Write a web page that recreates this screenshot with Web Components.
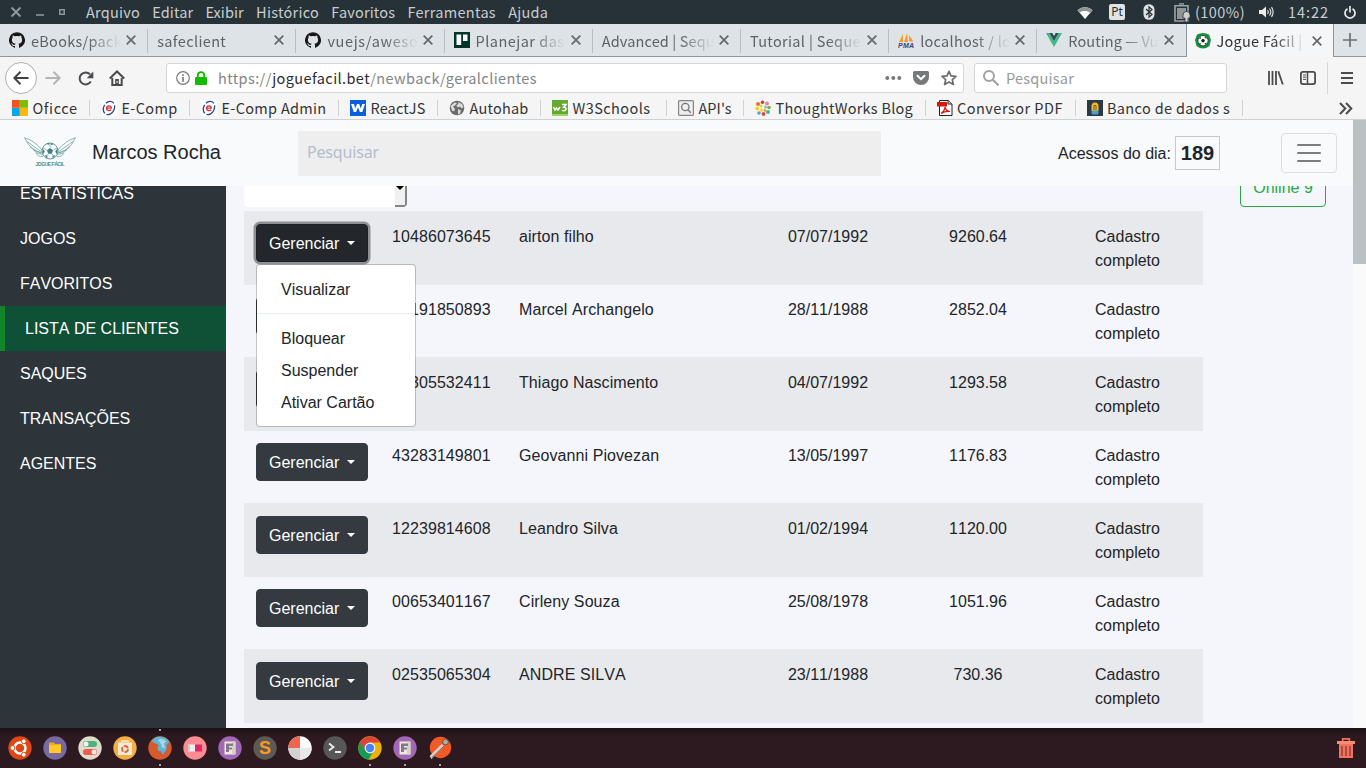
<!DOCTYPE html>
<html lang="pt-BR">
<head>
<meta charset="utf-8">
<title>Jogue Fácil</title>
<style>
html,body{margin:0;height:100%;overflow:hidden}
body{font:16px/24px "Liberation Sans",Arial,sans-serif;color:#212529}
</style>
</head>
<body>
<desk-top></desk-top>
<script>
const sheet = (css, html) => `<style>*{box-sizing:border-box}${css}</style>${html}`;
const define = (name, render, after) => customElements.define(name, class extends HTMLElement {
  connectedCallback() {
    if (this.shadowRoot) return;
    const t = document.createElement('template');
    t.innerHTML = render(this);
    this.attachShadow({mode: 'open'}).append(t.content.cloneNode(true));
    if (after) after(this);
  }
});

const pageIcon = '<circle cx="12" cy="12" r="11.7" fill="#a368b5"/><path d="M6.500 5.500h11v13h-11z" fill="#eceadf"/><path d="M14 5.500h3.500v13H14z" fill="#d5d1c5"/><path d="M8 7.500h7V10h-4v1.500h3v2h-3V16H8z" fill="#857889"/>';
const ecomp = '<path fill="#fff" d="M0 0h16v16H0z"/><ellipse cx="8" cy="8" rx="5.300" ry="6.900" fill="none" stroke="#2a4490" stroke-width="1.300" stroke-dasharray="9 2" transform="rotate(25 8 8)"/><path d="M5.500 8.200h4.800c0-3.200-4.700-3.200-4.800 0 0 2.700 3.200 3 4.700 1.500" fill="none" stroke="#d8333c" stroke-width="1.300"/>';
const github = '<path fill="#191717" d="M8 .2a8 8 0 0 0-2.5 15.6c.4.1.5-.2.5-.4v-1.5c-2.200.5-2.700-1-2.700-1-.4-.9-.9-1.200-.9-1.200-.7-.5.1-.5.1-.5.8.1 1.200.8 1.200.8.7 1.300 1.900.9 2.300.7.1-.5.3-.9.5-1.100-1.800-.2-3.600-.9-3.600-3.900 0-.9.3-1.600.8-2.100-.1-.2-.4-1 .1-2.100 0 0 .7-.2 2.200.8a7.500 7.500 0 0 1 4 0c1.500-1 2.200-.8 2.200-.8.4 1.100.2 1.900.1 2.100.5.6.8 1.300.8 2.100 0 3.100-1.900 3.700-3.700 3.900.3.300.6.8.6 1.500v2.300c0 .2.1.5.5.4A8 8 0 0 0 8 .2z"/>';
// name: [viewBox width, viewBox height, content]
const ICONS = {
  wclose: [12,12,'<path d="M1.500 1.500l9 9M10.500 1.500l-9 9" stroke="#8d979c" stroke-width="2" fill="none"/>'],
  wmin: [8,8,'<path d="M0 7h8" stroke="#8d979c" stroke-width="1.600"/>'],
  wmax: [6,6,'<path d="M.8.8h4.400v4.400H.8z" fill="none" stroke="#8d979c" stroke-width="1.500"/>'],
  close: [10,10,'<path d="M.7.7l8.600 8.600M9.300.7L.7 9.300" stroke="#66696c" stroke-width="1.700" fill="none"/>'],
  plus: [14,14,'<path d="M7 0v14M0 7h14" stroke="#6b7073" stroke-width="1.700"/>'],
  wifi: [16,13,'<path d="M8 13L.5 4.300C4.500.2 11.500.2 15.500 4.300z" fill="#fff"/><path d="M2.800 6.500L.5 4.100C4.500.2 11.500.2 15.500 4.100L13 6.700C10 4.500 6 4.500 2.800 6.500z" fill="#8d9498"/>'],
  bt: [12,16,'<rect x=".5" y=".3" width="11" height="15.400" rx="5.200" fill="#dfe3e5"/><path d="M3 5l6 5.500-3 2.700V2.800L9 5.500 3 11" fill="none" stroke="#263238" stroke-width="1.200"/>'],
  bat: [17,19,'<path d="M5 .9h5" stroke="#888f92" stroke-width="1.700"/><path d="M1 2.700h13V18H1z" fill="none" stroke="#9da3a6" stroke-width="1.600"/><path d="M3 5h9v11H3z" fill="#8f9598"/><path d="M9 15v-3a3.500 3.500 0 0 1 7 0v3h-2v4h-3v-4z" fill="#d0d3d5" stroke="#263238" stroke-width=".8"/>'],
  vol: [15,12,'<path d="M0 4h3l4-3.500v11L3 8H0z" fill="#eceff0"/><path d="M8.500 4q1.500 2 0 4M10.500 2.500q2.600 3.500 0 7M12.500 1.200q3.200 4.800 0 9.600" fill="none" stroke="#dce0e2" stroke-width="1.200"/>'],
  power: [12,13,'<path d="M3.500 2.700a5 5 0 1 0 5 0M6 0v6.500" fill="none" stroke="#e8ebec" stroke-width="1.700"/>'],
  github: [16,16,github],
  trello: [16,16,'<path fill="#04352a" d="M0 0h16v16H0z"/><path fill="#fff" d="M2.500 2.500h4.700v10.500H2.500zM9 2.500h4.500v6.500H9z"/>'],
  pma: [16,16,'<path d="M1 10L5 2v8zM6 10L9 1l1 9zM11 9.500V3l4.500 6.500z" fill="#f59b2e"/><text x="0" y="15.500" font-family="Liberation Sans" font-size="7" font-weight="700" font-style="italic" fill="#3b4478" textLength="16">PMA</text>'],
  vue: [16,14,'<path d="M0 0h3.300L8 8l4.700-8H16L8 14z" fill="#42b883"/><path d="M3.300 0h3L8 3l1.700-3h3L8 8z" fill="#35495e"/>'],
  jogue: [16,16,'<path d="M2 1.500q6-3 12 0l2 5.500-1.500 6q-6.500 5-13 0L0 7z" fill="#1d8f43"/><circle cx="8" cy="7.800" r="5.600" fill="#145430"/><circle cx="8" cy="7.800" r="4.700" fill="#fff"/><path d="M8 5.700l1.900 1.400-.7 2.200H6.800l-.7-2.200zM4 6l2-2.200-.3 2zM9.500 3.500L12 5.500l-2-.2zM4 10l1.300-.3.9 2zM12 9.500L10 12l-.2-1.700z" fill="#15251b"/>'],
  back: [16,14,'<path d="M15.500 7H1.500M7.500.8L1.300 7l6.200 6.200" fill="none" stroke="#3f4143" stroke-width="2"/>'],
  fwd: [16,14,'<path d="M.5 7h14M8.500.8L14.700 7l-6.200 6.200" fill="none" stroke="#b4b4b5" stroke-width="2"/>'],
  reload: [16,15,'<path d="M12.800 10.500A6 6 0 1 1 12 3.300" fill="none" stroke="#4a4b4d" stroke-width="2"/><path d="M15.300.5v6.700H8.700z" fill="#4a4b4d"/>'],
  home: [16,16,'<path d="M.8 8.500L8 1.500l7.200 7" fill="none" stroke="#4a4b4d" stroke-width="2"/><path d="M3.300 8v7h9.400V8" fill="none" stroke="#4a4b4d" stroke-width="2"/><path d="M6.200 9h3.600v6H6.200z" fill="#4a4b4d"/><path d="M7.500 11h1.200v2H7.500z" fill="#ddd"/>'],
  info: [14,14,'<circle cx="7" cy="7" r="6.300" fill="none" stroke="#7b7b7b" stroke-width="1.200"/><path d="M7 6v4.700M7 3.200v1.700" stroke="#7b7b7b" stroke-width="1.700"/>'],
  lock: [12,14,'<path d="M2.800 7V4.300a3.200 3.200 0 0 1 6.400 0V7" fill="none" stroke="#12bc00" stroke-width="1.900"/><rect y="6" width="12" height="8" rx="1" fill="#12bc00"/>'],
  dots: [17,4,'<circle cx="2.300" cy="2" r="2"/><circle cx="8.300" cy="2" r="2"/><circle cx="14.300" cy="2" r="2"/>'],
  pocket: [16,14,'<path d="M1.500 0h13A1.500 1.500 0 0 1 16 1.500V6a8 8 0 0 1-16 0V1.500A1.500 1.500 0 0 1 1.500 0z"/><path d="M4.500 4.800L8 8.200l3.500-3.400" fill="none" stroke="#fff" stroke-width="2" stroke-linecap="round"/>'],
  star: [16,16,'<path d="M8 1.300l2 4.500 5 .5-3.700 3.300 1.100 4.900L8 12l-4.400 2.500 1.100-4.900L1 6.300l5-.5z" fill="none" stroke="#6c6c6d" stroke-width="1.700" stroke-linejoin="round"/>'],
  search: [16,16,'<circle cx="6" cy="6" r="5" fill="none" stroke="#a2a2a2" stroke-width="2"/><path d="M9.800 9.800l5.700 5.500" stroke="#a2a2a2" stroke-width="2.200"/>'],
  library: [16,14,'<path d="M1 0v14M4.500 0v14M8 0v14M10.300.3l4.500 13.200" stroke="#4a4b4d" stroke-width="1.800"/>'],
  sidebar: [16,14,'<rect x=".9" y=".9" width="14.200" height="12.200" rx="2" fill="none" stroke="#4a4b4d" stroke-width="1.800"/><path d="M7.500 1v12" stroke="#4a4b4d" stroke-width="1.500"/><path d="M3 4h3M3 6.200h3M3 8.400h3" stroke="#4a4b4d"/>'],
  burger: [12,12,'<path d="M0 1h12M0 6h12M0 11h12" stroke="#4a4b4d" stroke-width="1.900"/>'],
  office: [16,16,'<path fill="#f1511b" d="M0 0h7.800v7.800H0z"/><path fill="#80bc06" d="M8 0h8v7.800H8z"/><path fill="#05a6f0" d="M0 8h7.800v8H0z"/><path fill="#fbb60a" d="M8 8h8v8H8z"/>'],
  ecomp: [16,16,ecomp],
  react: [16,16,'<path fill="#0a60da" d="M0 0h16v16H0z"/><path d="M1 4h3l1.200 4.500L7 4h2.200l1.600 4.500L12.200 4H15l-2.700 8H9.900L8 7.500 6.100 12H3.700z" fill="#fff"/>'],
  globe: [16,16,'<circle cx="8" cy="8" r="7.300" fill="#6b6b6b"/><path d="M1.500 6l4-3.500 2.500.5-2 2.500-2 1 2 2.500-1 2.500-2-1zM9 2l4 2 1.500 3-2 1.500-1.500-2-2.500 1-1-2.500 2-1zM9 9l3 1.500-1 3-2 1z" fill="#dcdcdc"/>'],
  w3: [16,16,'<path fill="#64a931" d="M0 0h16v16H0z"/><path d="M0 14h16v2H0z" fill="#9fd05f"/><path d="M1.500 7l1.500 3 1.500-2 1.500 2 2-3M10 4.500h4l-2.300 2.700q2.800 0 2.300 2.200-1 2-4 1" fill="none" stroke="#fff" stroke-width="1.500"/>'],
  api: [16,16,'<rect x=".6" y=".6" width="14.800" height="14.800" rx="1" fill="#eee" stroke="#858585" stroke-width="1.200"/><circle cx="7.300" cy="7" r="3.700" fill="none" stroke="#777" stroke-width="1.300"/><path d="M10 9.800l2.700 3" stroke="#777" stroke-width="1.500"/>'],
  tw: [16,16,'<g fill="#f28a2e"><circle cx="3" cy="4" r="2" fill="#f06a35"/><circle cx="7.500" cy="2.200" r="1.800" fill="#a5503a"/><circle cx="12" cy="3.500" r="2" fill="#ee7fa8"/><circle cx="14" cy="7.500" r="1.800" fill="#6fb844"/><circle cx="13" cy="12" r="2" fill="#49b3a0"/><circle cx="8.500" cy="14" r="1.900" fill="#e8443a"/><circle cx="4" cy="13" r="1.800" fill="#49a8d0"/><circle cx="2.200" cy="8.500" r="1.900" fill="#f5d21f"/><circle cx="6" cy="6" r="1.500" fill="#f5d21f"/><circle cx="10.500" cy="7" r="1.500" fill="#8cc6a8"/><circle cx="6.500" cy="10.300" r="1.700" fill="#f5d84c"/><circle cx="10" cy="10.500" r="1.300"/></g>'],
  pdf: [16,16,'<path d="M2.500.5h9L15 4v11.500H2.500z" fill="#fff" stroke="#222"/><path d="M11 .5V4h4" fill="#ddd" stroke="#222"/><path fill="#d9150f" d="M0 2h10v4.500H0z"/><path d="M4 13.500q4-3 4-6.500 1 4.500 5 4.500-5-.5-9 2" fill="none" stroke="#d9150f" stroke-width="1.200"/>'],
  banco: [16,16,'<path fill="#2c3a47" d="M0 0h16v16H0z"/><path d="M4.500 11V6a3.500 3.500 0 0 1 7 0v5z" fill="#f2b827"/><path d="M4.500 10.500h7V13q0 1.500-1.500 1.500H6q-1.500 0-1.500-1.500z" fill="#4a9fd0"/><path d="M7 10V5.500h2V10" fill="none" stroke="#6b5520" stroke-width=".9"/>'],
  more: [14,13,'<path d="M1 1l5.300 5.500L1 12M7 1l5.300 5.500L7 12" fill="none" stroke="#4a4b4d" stroke-width="2"/>'],
  logo: [52,30,'<g fill="none" stroke="#629a9a" stroke-width=".7"><path d="M18 13Q11 4 .5.7q4 8 8 11.300t10 4M18 15Q9 9 3 4.500M17 16Q10 13 6 9.500M18.500 17.500Q12 17 9 12.500m10 7Q14 20 12 16"/><path d="M34 13Q41 4 51.500.7q-4 8-8 11.300t-10 4M34 15q9-6 15-10.500M35 16q7-3 11-6.500M33.500 17.500Q40 17 43 12.500m-10 7q5 .5 7-3.500"/><circle cx="26" cy="14" r="8" fill="#f8fafc" stroke-width="1"/><path d="M26 10.500V6.500M22.500 13l-3.500-2M29.500 13l3.500-2M24 17l-2.500 3.500M28 17l2.500 3.500"/></g><path d="M26 11l3 2.200-1.200 3.500h-3.600L23 13.200zM22.500 6.800l3-.8-1 2zM29.500 7l-3-.8 1 2zM18.500 11.500l2.300 3-2 3zM33.500 11.500l-2.300 3 2 3zM20.500 18l3 1-.3 2.500zM31.500 18l-3 1 .3 2.500z" fill="#39807f"/><text x="11.500" y="29" font-family="Liberation Sans" font-weight="700" font-size="5" fill="#4b8b8b" textLength="29">JOGUE FÁCIL</text>'],
  ubuntu: [24,24,'<circle cx="12" cy="12" r="11.700" fill="#dd4814"/><circle cx="12" cy="12" r="5.500" fill="none" stroke="#fff" stroke-width="2.500"/><g fill="#fff" stroke="#dd4814"><circle cx="4.500" cy="12" r="2.400"/><circle cx="15.800" cy="5.300" r="2.400"/><circle cx="15.800" cy="18.700" r="2.400"/></g>'],
  files: [24,24,'<circle cx="12" cy="12" r="11.700" fill="#776a9e"/><path d="M6 6.500h5l1 1.500h6v9H6z" fill="#f5a81c"/><path d="M6 9h12v8H6z" fill="#ffca28"/>'],
  tweak: [24,24,'<circle cx="12" cy="12" r="11.700" fill="#dedbcd"/><rect x="5" y="5" width="14" height="6" rx="3" fill="#4bb37b"/><circle cx="8" cy="8" r="2.500" fill="#e9f5ec"/><rect x="5" y="13" width="14" height="6" rx="3" fill="#ec5a50"/><circle cx="16" cy="16" r="2.500" fill="#fae6e0"/>'],
  store: [24,24,'<circle cx="12" cy="12" r="11.700" fill="#f6ad43"/><path d="M5 6.500h14V19H5z" fill="#f3ead8"/><path d="M9 6.500V5h6v1.500" fill="none" stroke="#f3ead8" stroke-width="1.500"/><circle cx="12" cy="13" r="3" fill="none" stroke="#e8622c" stroke-width="1.800" stroke-dasharray="5 1.300"/>'],
  firefox: [24,24,'<circle cx="12" cy="12" r="11.700" fill="#d65a2b"/><path d="M3.500 5Q8-.5 14 .8q6 1.200 7.500 6.500-2-1-3 1.500 1.500 6-4.500 10 .5-3-1.500-3.500-3.500-.5-3-4 2-1.500 0-3-3-1-6-3.300z" fill="#5fb4d8"/><path d="M10 4q5-3 8 1.500l-2 2 1 5-3-1-1-3.500z" fill="#a3d6e8"/>'],
  eraser: [24,24,'<circle cx="12" cy="12" r="11.700" fill="#fb8c92"/><path d="M5 8.500h8v7H5z" fill="#eee"/><path d="M12 8.500h7v7h-7z" fill="#e3256b"/><path d="M5 8.500h2v7H5z" fill="#ccc"/>'],
  page: [24,24,pageIcon],
  sublime: [24,24,'<circle cx="12" cy="12" r="11.700" fill="#5b5a55"/><text x="12" y="18.300" text-anchor="middle" font-family="Liberation Sans" font-weight="700" font-size="18" fill="#fb9726">S</text>'],
  pie: [24,24,'<circle cx="12" cy="12" r="11.700" fill="#fafafa"/><path d="M12 12V.3A11.700 11.700 0 0 0 .3 12z" fill="#ef6650"/><path d="M.3 12A11.700 11.700 0 0 0 12 23.700V12z" fill="#d2d2d2"/><path d="M12 12v11.700A11.700 11.700 0 0 0 23.700 12z" fill="#e8e8e8"/>'],
  term: [24,24,'<circle cx="12" cy="12" r="11.700" fill="#575757"/><path d="M6 7.500l4.500 3.500L6 14.500M12 16h6" fill="none" stroke="#eee" stroke-width="1.800"/>'],
  chrome: [24,24,'<circle cx="12" cy="12" r="11.700" fill="#eab20b"/><path d="M12 12L1.900 6.200a11.700 11.700 0 0 0 8.600 17.400L15 16z" fill="#109d58"/><path d="M12 6.500h10.300a11.700 11.700 0 0 0-20.400-.3L7 14.500z" fill="#db4437"/><circle cx="12" cy="12" r="5.400" fill="#f5f5f5"/><circle cx="12" cy="12" r="4.200" fill="#4285f4"/>'],
  postman: [24,24,'<circle cx="12.500" cy="11.500" r="10.700" fill="#f15a24"/><path d="M3 21L15 9" stroke="#d9cfc4" stroke-width="3.400"/><path d="M4 21.500L16 10" stroke="#7a6862" stroke-width="1"/><circle cx="17.500" cy="6" r="2.900" fill="#b6aaa2" stroke="#54423e" stroke-width=".8"/><path d="M2 20l2 3" stroke="#ddd"/>'],
  trash: [18,20,'<path d="M5.700 4V.8h6.600V4" fill="none" stroke="#f27059" stroke-width="1.700"/><path d="M2 6h14v14H2z" fill="#f4735e"/><path d="M0 3h18v3H0z" fill="#f98a73"/><path d="M5 8v10M9 8v10M13 8v10" stroke="#a54840" stroke-width="1.800"/>']
};
define('ui-icon', el => {
  const [w, h, body] = ICONS[el.getAttribute('name')];
  return sheet(`:host{display:block;flex:none;width:${el.getAttribute('w') || w}px}svg{display:block;width:100%}`,
    `<svg viewBox="0 0 ${w} ${h}">${body}</svg>`);
});

// One line of interface text, tracked so that it spans the given width.
define('ui-label', el => sheet(
  `:host{display:block;flex:none;white-space:pre;width:${el.getAttribute('w')}px}span{display:inline-block}`,
  `<span><slot></slot></span>`), el => {
  const s = el.shadowRoot.querySelector('span');
  const n = el.textContent.length;
  s.style.letterSpacing = ((+el.getAttribute('w') - s.getBoundingClientRect().width) / n).toFixed(3) + 'px';
});

const UI = '"Noto Sans CJK JP","Noto Sans",sans-serif';
const label = (w, t) => `<ui-label w="${w}">${t}</ui-label>`;
const icon = (n, w) => `<ui-icon name="${n}"${w ? ` w="${w}"` : ''}></ui-icon>`;

define('menu-bar', () => sheet(
  `:host{display:flex;height:24px;background:#263238;color:#c8cdcf;font:14.500px/24px ${UI};align-items:center;padding:0 10px 0 10px}
   .win{display:flex;width:76px;align-items:center;gap:14px}.win :nth-child(3){margin-left:1px}
   nav{display:flex;gap:12.200px;flex:1}.tray{display:flex;align-items:center}
   .pt{background:#dfe3e5;color:#263238;font:12px/16px "Noto Sans",sans-serif;width:16px;height:16px;border-radius:2px;text-align:center;margin:0 18px 0 16px}`,
  `<div class="win">${icon('wclose')}${icon('wmin')}${icon('wmax')}</div>
   <nav>${label(54,'Arquivo')}${label(41,'Editar')}${label(38.5,'Exibir')}${label(63,'Histórico')}${label(64,'Favoritos')}${label(88.5,'Ferramentas')}${label(40,'Ajuda')}</nav>
   <div class="tray">${icon('wifi')}<span class="pt">Pt</span>${icon('bt')}<span style="width:19px"></span>${icon('bat')}<span style="width:4px"></span>${label(50,'(100%)')}<span style="width:14px"></span>${icon('vol')}<span style="width:14px"></span>${label(41,'14:22')}<span style="width:15px"></span>${icon('power')}</div>`));

define('browser-tab', el => {
  const on = el.hasAttribute('active'), ic = el.getAttribute('icon');
  return sheet(
  `:host{display:flex;flex:none;width:${on ? 148 : 148.2}px;height:33px;align-items:center;padding:0 ${on ? 11 : 12}px 0 9px;position:relative;
     ${on ? 'background:#f5f6f7;border:solid #8f9599;border-width:0 1px;padding-left:8px;color:#2f3133' : 'border-bottom:1px solid #8f9599;color:#5d6265'}}
   ${on ? '' : ':host::after{content:"";position:absolute;right:0;top:5px;height:24px;width:1px;background:#b9bec1}:host([last])::after{display:none}'}
   .t{flex:1;overflow:hidden;margin-left:${ic ? 6 : 0}px;margin-right:5px;-webkit-mask-image:linear-gradient(90deg,#000 calc(100% - 34px),transparent)}`,
  `${ic ? icon(ic) : ''}<div class="t"><ui-label w="${el.getAttribute('w')}">${el.textContent}</ui-label></div>${icon('close')}`);
});

define('tab-strip', () => sheet(
  `:host{display:flex;height:33px;background:#dee3e7;font:14.500px/33px ${UI}}
   .new{flex:1;border-bottom:1px solid #8f9599;display:flex;align-items:center;justify-content:center}`,
  `<browser-tab icon="github" w="91">eBooks/pack</browser-tab><browser-tab w="69">safeclient</browser-tab><browser-tab icon="github" w="91">vuejs/aweso</browser-tab><browser-tab icon="trello" w="89">Planejar das</browser-tab><browser-tab w="113">Advanced | Sequ</browser-tab><browser-tab w="111">Tutorial | Seque</browser-tab><browser-tab icon="pma" w="91">localhost / lo</browser-tab><browser-tab last icon="vue" w="90">Routing — Vu</browser-tab><browser-tab active icon="jogue" w="86">Jogue Fácil |</browser-tab><div class="new">${icon('plus')}</div>`));

define('tool-bar', () => sheet(
  `:host{display:flex;height:42px;background:#f5f5f6;align-items:center;padding:0 13px 0 5px;font:14.500px/28px ${UI}}
   .back{width:32px;height:32px;border:1px solid #aeb0b2;border-radius:50%;background:#fff;display:flex;align-items:center;justify-content:center;margin-right:8px}
   .field{display:flex;align-items:center;background:#fff;border:1px solid #d5d6d7;border-radius:3px;height:30px}
   .url{width:798px;margin-left:41px;padding:0 6px 0 9px;fill:#77787a;color:#838486}.url b{font-weight:400;color:#2b2c2e}
   .find{width:253px;margin-left:10px;padding:0 8px;gap:7px;color:#97989a}
   .sep{width:1px;height:32px;background:#d5d6d7;margin:0 13px 0 11px}`,
  `<div class="back">${icon('back')}</div>${icon('fwd')}<span style="width:17px"></span>${icon('reload')}<span style="width:15px"></span>${icon('home')}
   <div class="field url">${icon('info')}<span style="width:5px"></span>${icon('lock')}<span style="width:11px"></span>${label(319,'https://<b>joguefacil.bet</b>/newback/geralclientes')}<span style="flex:1"></span>${icon('dots')}<span style="width:11px"></span>${icon('pocket')}<span style="width:12px"></span>${icon('star')}</div>
   <div class="field find">${icon('search')}${label(68,'Pesquisar')}</div><span style="flex:1"></span>
   ${icon('library')}<span style="width:16px"></span>${icon('sidebar')}<span class="sep"></span>${icon('burger')}`));

define('book-mark', el => sheet(
  `:host{display:flex;align-items:center;gap:4.500px;flex:none;padding-right:11.500px;margin-right:11px;border-right:1px solid #d0d1d2;height:16px}`,
  `${icon(el.getAttribute('icon'))}${label(el.getAttribute('w'), el.textContent)}<slot name="pad"></slot>`));

define('bookmarks-bar', () => sheet(
  `:host{display:flex;height:21px;background:#f5f5f6;border-bottom:1px solid #cfd0d1;align-items:center;padding:0 13px 2px 12px;font:14.500px/20px ${UI};color:#333436}`,
  [['office',45,'Oficce'],['ecomp',56,'E-Comp'],['ecomp',105,'E-Comp Admin'],['react',55,'ReactJS'],['globe',59,'Autohab'],['w3',78,'W3Schools'],['api',33,"API's"],['tw',137.5,'ThoughtWorks Blog'],['pdf',106,'Conversor PDF'],['banco',123,'Banco de dados s']]
    .map(([i,w,t]) => `<book-mark icon="${i}" w="${w}"${i == 'w3' ? ' style="padding-right:15.500px"' : ''}>${t}</book-mark>`).join('') + `<span style="flex:1"></span>${icon('more')}`));

define('site-header', () => sheet(
  `:host{display:flex;height:66px;background:#f8fafc;align-items:center;padding-left:24px;position:relative;z-index:20}
   .brand{font-size:20px;line-height:30px;margin:-2px 0 0 16px;width:206px;white-space:nowrap}
   .q{width:583px;height:45px;background:#eee;color:#b5bccd;font:16px/43px "Noto Sans",sans-serif;padding-left:9px;margin:1px 177px 0 0}
   .n{border:1px solid #c6c8ca;font:bold 20px/32px "Liberation Sans",sans-serif;width:45px;height:34px;text-align:center;margin:0 61px 0 4px}
   .tog{width:56px;height:40px;border:1px solid #dcdee0;border-radius:4px;display:flex;flex-direction:column;align-items:center;justify-content:center;gap:6px}
   .tog i{width:24px;height:2px;background:#7b7c7e;border-radius:1px}`,
  `<ui-icon name="logo" style="margin-top:-3px"></ui-icon><div class="brand">Marcos Rocha</div><div class="q">${label(72,'Pesquisar')}</div><span style="width:113px;white-space:nowrap;margin-top:2px">Acessos do dia:</span><span class="n">189</span><div class="tog"><i></i><i></i><i></i></div>`));

define('side-nav', () => sheet(
  `:host{display:block;width:226px;flex:none;background:#2d353b;overflow:hidden;color:#fff;font-kerning:none}
   ul{list-style:none;margin:-15px 0 0;padding:0}li{height:45px;line-height:45px;padding-left:20px}
   .on{background:#0f5137;border-left:5px solid #148429}`,
  `<ul>${['ESTATISTICAS','JOGOS','FAVORITOS','LISTA DE CLIENTES','SAQUES','TRANSAÇÕES','AGENTES'].map((t,i) => `<li${i == 3 ? ' class="on"' : ''}>${t}</li>`).join('')}</ul>`));

define('manage-button', el => sheet(
  `:host{display:block;width:112px;position:relative}
   .b{height:38px;background:#343a40;border:1px solid #343a40;border-radius:4px;color:#fff;padding:0 12px;line-height:37px;display:flex;align-items:center;letter-spacing:0}
   :host([open]) .b{background:#23272b;border-color:#1d2124;box-shadow:0 0 0 2.500px #8e9194}
   i{border:4.800px solid transparent;border-top-color:#fff;border-bottom:0;margin-left:8px}`,
  `<div class="b">Gerenciar<i></i></div><slot></slot>`));

define('drop-menu', () => sheet(
  `:host{display:block;position:absolute;left:0;top:40px;width:160px;background:#fff;background-clip:padding-box;border:1px solid rgba(0,0,0,.2);border-radius:4px;padding:8px 0;z-index:10;font-kerning:none;letter-spacing:0}
   div{padding:5px 24px 3px;height:32px}hr{margin:8px 0;border:0;border-top:1px solid #e9ecef}`,
  `<div>Visualizar</div><hr><div>Bloquear</div><div>Suspender</div><div>Ativar Cartão</div>`));

define('client-row', el => {
  const [cpf, name, born, value] = el.getAttribute('data').split('|');
  return sheet(
  `:host{display:grid;grid-template-columns:136px 127px 266px 110px 190px 109px;height:73px;border-top:1px solid #e8e9ed;width:959px;font-kerning:none}
   :host(:nth-of-type(odd)){background:#e8e9ed}
   div{padding:13px 12px 11px;letter-spacing:.080px}.m{padding:12px}.c{text-align:center;padding:13px 0 11px;letter-spacing:0}`,
  `<div class="m"><manage-button${el.hasAttribute('open') ? ' open><drop-menu></drop-menu>' : '>'}</manage-button></div><div>${cpf}</div><div>${name}</div><div class="c">${born}</div><div class="c">${value}</div><div class="c">Cadastro<br>completo</div>`);
});

define('client-page', () => sheet(
  `:host{display:block;flex:1;background:#f5f6fc;overflow:hidden;padding-left:18px}
   .top{display:flex;justify-content:space-between;height:38px;margin:-17px 27px 4px 0}
   .sel{width:163px;background:#fff;border-radius:4px;display:flex;justify-content:flex-end;overflow:hidden}
   .sel b{width:12px;background:#f1f1f2;border:solid #838485;border-width:0 2px 2px 0;border-radius:0 0 3px;display:flex;align-items:center}
   .sel i{border:4px solid transparent;border-top-color:#000;border-bottom:0;margin:2px 0 0 1px}
   .on{width:86px;border:1px solid #28a745;border-radius:4px;color:#28a745;text-align:center;line-height:36px}`,
  `<div class="top"><div class="sel"><b><i></i></b></div><div class="on">Online 9</div></div>
   ${['10486073645|airton filho|07/07/1992|9260.64','02191850893|Marcel Archangelo|28/11/1988|2852.04','04305532411|Thiago Nascimento|04/07/1992|1293.58','43283149801|Geovanni Piovezan|13/05/1997|1176.83','12239814608|Leandro Silva|01/02/1994|1120.00','00653401167|Cirleny Souza|25/08/1978|1051.96','02535065304|ANDRE SILVA|23/11/1988|730.36'].map((d,i) => `<client-row data="${d}"${i ? '' : ' open'}></client-row>`).join('')}<div style="height:1px;width:959px;background:#e8e9ed"></div>`));

define('scroll-bar', () => sheet(
  `:host{display:block;width:13px;flex:none;background:#fafafa}div{height:144px;background:#bbc0c3}`, `<div></div>`));

define('dock-item', el => sheet(
  `:host{display:flex;flex-direction:column;align-items:center;justify-content:space-between;width:35px;height:40px;padding:1px 0 2px}
   i{width:2px;height:2px;background:#d8d2d4;border-radius:1px}.off{visibility:hidden}`,
  `<i class="${el.hasAttribute('focused') ? '' : 'off'}"></i>${icon(el.getAttribute('name'))}<i class="${el.hasAttribute('running') ? '' : 'off'}"></i>`));

define('app-dock', () => sheet(
  `:host{display:flex;height:40px;background:linear-gradient(#1b1114,#2c1a20 8px);padding:0 11px 0 2.500px;align-items:center}`,
  ['ubuntu','files','tweak','store','firefox','eraser','page','sublime','pie','term','chrome','page','postman']
    .map((n,i) => `<dock-item name="${n}"${i == 4 ? ' focused' : ''}${[4,10,11,12].includes(i) ? ' running' : ''}></dock-item>`).join('') + `<span style="flex:1"></span>${icon('trash')}`));

define('desk-top', () => sheet(
  `:host{display:flex;flex-direction:column;width:1366px;height:768px;overflow:hidden}
   .view{display:flex;height:608px}.site{flex:1;display:flex;flex-direction:column;min-width:0}.cols{display:flex;flex:1;min-height:0}`,
  `<menu-bar></menu-bar><tab-strip></tab-strip><tool-bar></tool-bar><bookmarks-bar></bookmarks-bar>
   <div class="view"><div class="site"><site-header></site-header><div class="cols"><side-nav></side-nav><client-page></client-page></div></div><scroll-bar></scroll-bar></div>
   <app-dock></app-dock>`));
</script>
</body>
</html>
